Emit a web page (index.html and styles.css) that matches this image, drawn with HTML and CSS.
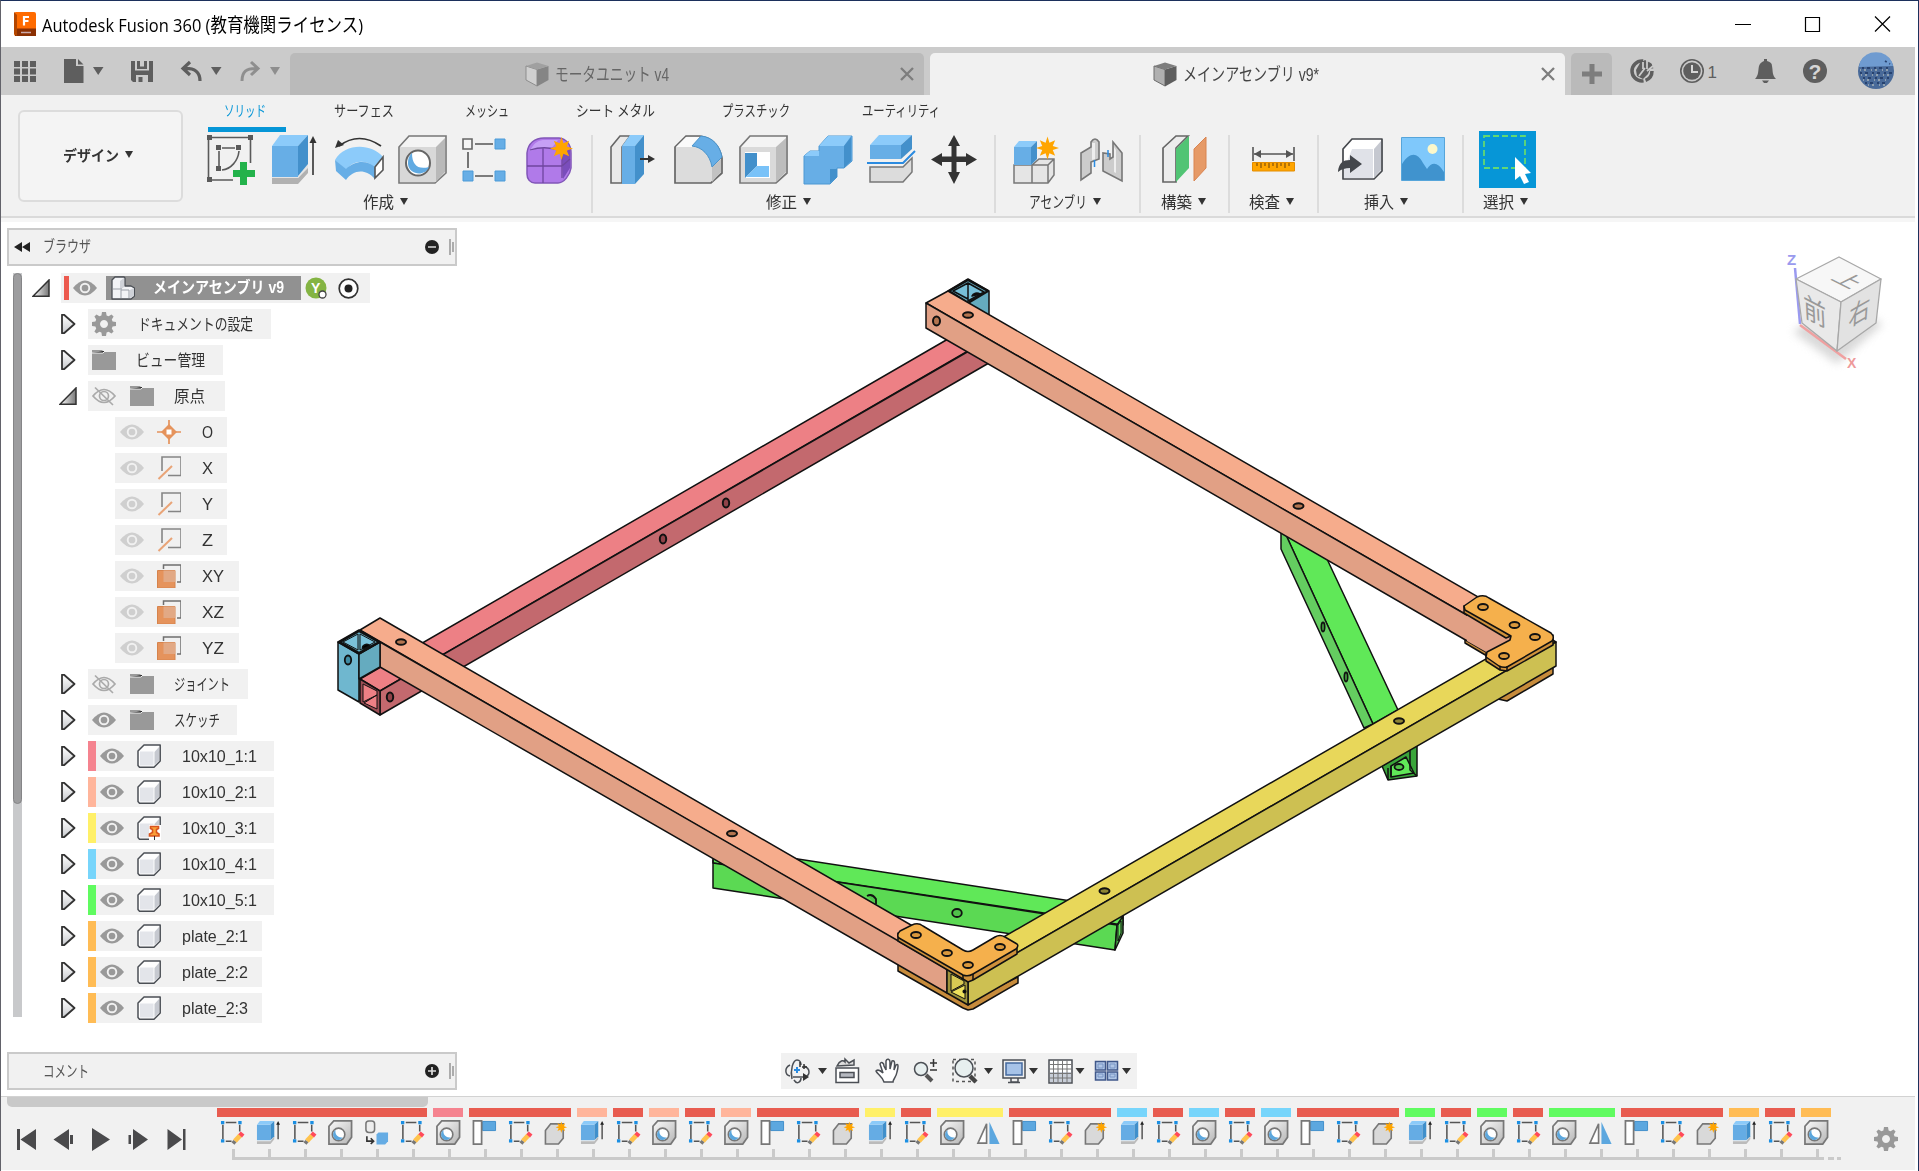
FILE: index.html
```html
<!DOCTYPE html>
<html lang="ja">
<head>
<meta charset="utf-8">
<title>Autodesk Fusion 360</title>
<link rel="stylesheet" href="styles.css">
</head>
<body>
<svg class="defs" width="0" height="0">
  <defs>
    <linearGradient id="gBlue" x1="0" y1="0" x2="0" y2="1"><stop offset="0" stop-color="#7cc0f5"/><stop offset="1" stop-color="#5fabe3"/></linearGradient>
    <linearGradient id="gGray" x1="0" y1="0" x2="1" y2="1"><stop offset="0" stop-color="#fafafa"/><stop offset="1" stop-color="#b5b5b5"/></linearGradient>
    <linearGradient id="gTri" x1="0" y1="0" x2="1" y2="0"><stop offset="0" stop-color="#fff"/><stop offset="1" stop-color="#777"/></linearGradient>
    <linearGradient id="gFace" x1="0" y1="0" x2="0" y2="1"><stop offset="0" stop-color="#fff"/><stop offset="1" stop-color="#c9cbcf"/></linearGradient>
    <symbol id="star" viewBox="-12 -12 24 24"><path fill="#ffa500" d="M0-12 2-5.500 8-8 5.500-2 12 0 5.500 2 8 8 2 5.500 0 12-2 5.500-8 8-5.500 2-12 0-5.500-2-8-8-2-5.500z"/></symbol>
    <symbol id="gear" viewBox="-12 -12 24 24"><path fill="#999" fill-rule="evenodd" d="M-2-12H2L2.600-8.600 4.600-7.800 7.500-9.600 9.600-7.500 7.800-4.600 8.600-2.600 12-2V2L8.600 2.600 7.800 4.600 9.600 7.500 7.500 9.600 4.600 7.800 2.600 8.600 2 12H-2L-2.600 8.600-4.600 7.800-7.500 9.600-9.600 7.500-7.800 4.600-8.600 2.600-12 2V-2L-8.600-2.600-7.800-4.600-9.600-7.500-7.500-9.600-4.600-7.800-2.600-8.600zM0-4a4 4 0 1 0 .01 0z"/></symbol>
    <symbol id="eye" viewBox="0 0 24 24"><path fill="#999" d="M0 12Q12-3 24 12 12 27 0 12z"/><circle cx="12" cy="12" r="4.300" fill="#999" stroke="#f1f1f1" stroke-width="1.900"/></symbol>
    <symbol id="eyeoff" viewBox="0 0 24 24"><g fill="none" stroke="#aaa" stroke-width="1.700"><path d="M1 12Q12-1 23 12 12 25 1 12z"/><circle cx="12" cy="12" r="4.500"/><path d="M3 3.500 21 21"/></g></symbol>
    <symbol id="folder" viewBox="0 0 24 24"><path fill="#999" d="M0 2h10l2 2H24V22H0z"/><path stroke="#f1f1f1" d="M0 5h11l2-2"/></symbol>
    <symbol id="origin" viewBox="0 0 24 24"><path stroke="#e5935c" stroke-width="1.700" d="M12 0V24M0 12H24"/><path fill="#e5935c" d="M12 4 20 12 12 20 4 12z"/><path fill="#fff" d="M9.500 9.500h5v5h-5z"/></symbol>
    <symbol id="axis" viewBox="0 0 24 24"><path fill="none" stroke="#858585" stroke-width="1.600" d="M5 15V1H24V19.500H11"/><path stroke="#e9a477" stroke-width="2" d="M1.500 23 15 10"/></symbol>
    <symbol id="plane" viewBox="0 0 24 24"><path fill="none" stroke="#6f6f6f" stroke-width="1.500" d="M6.500 5V1H24V18H20"/><path fill="#e5935c" stroke="#d6834c" d="M.5 6.500H18V24H.5z"/><path fill="#e2a985" d="M6.500 6.500H18V18H6.500z"/></symbol>
    <symbol id="box" viewBox="0 0 24 24"><path fill="#fdfdfd" stroke="#4b4f55" stroke-width="1.500" stroke-linejoin="round" d="M1 7 7 1H23.200V17L17 23.200H2.500L1 21.500z"/><path fill="#e3e5ea" d="M3 7.500H16.500V21.500H3z"/><path fill="#c6c9d0" d="M17.500 8 22 3V16.500L17.500 21z"/></symbol>
    <symbol id="pinbox" viewBox="0 0 24 24"><use href="#box"/><path fill="#fff" d="M12 9H24V24H12z"/><path fill="#f9a13a" stroke="#d9541e" stroke-width="1.600" d="M13.500 10.500h8v2l-2 1v3l2.500 1.500v2H12.500v-2l3-1.500v-3l-2-1z"/><path stroke="#333" d="M17.500 20V24"/></symbol>
    <symbol id="assy" viewBox="0 0 24 24"><path fill="#f2f3f6" stroke="#4b4f55" stroke-width="1.300" stroke-linejoin="round" d="M1 4 4 1H13L14 2V10H20L23.500 12V20L20 23H1z"/><path fill="#cfd2d8" d="M9 5 13 2V11L9 14zM19 14l4-2v8l-4 2z"/><path fill="none" stroke="#9ba0a8" d="M2 13H9M10 12V22M10 14h8v8"/></symbol>
    <symbol id="tSketch" viewBox="0 0 26 26"><path fill="none" stroke="#555" stroke-width="1.600" d="M3 5V20M6 2.500H17M20.500 5V12M6 22H12"/><path fill="#1a8fe3" d="M1 1h3.500v3.500H1zM19 1h3.500v3.500H19zM1 20h3.500v3.500H1z"/><path stroke="#ffc34d" stroke-width="5" d="M15.500 22 21 16"/><path stroke="#ff4a5a" stroke-width="5" d="M21 16.500 23.500 13.500"/><path stroke="#777" stroke-width="4" d="M13.500 24.500 15.500 22"/></symbol>
    <symbol id="tExtrude" viewBox="0 0 26 26"><path fill="#bbb" d="M1 22H15L19 17V20L15 25H1z"/><path fill="#65ace4" d="M1 5H15V21H1z"/><path fill="#8bcaf9" d="M1 5 4 1H19L15 5z"/><path fill="#3f8fcb" d="M15 5 19 1V17L15 21z"/><path stroke="#444" stroke-width="1.400" d="M23 3V20"/><path fill="#222" d="M23 1 25 5H21z"/></symbol>
    <symbol id="tHole" viewBox="0 0 26 26"><path fill="url(#gGray)" stroke="#777" stroke-width="1.800" d="M1 6.500 6 1H24.500V18L19.500 25H1z"/><circle cx="11" cy="15" r="6.500" fill="#fff" stroke="#777" stroke-width="1.700"/><path fill="#5ca7dd" d="M8 10.500a6 6 0 0 0 7.500 7.500 5.500 5.500 0 1 1-7.500-7.500z"/></symbol>
    <symbol id="tCopy" viewBox="0 0 26 26"><rect x="2" y="1" width="9" height="12" rx="3" fill="#ededed" stroke="#777" stroke-width="1.600"/><path fill="#65ace4" d="M13 15 15 13H25V22L22 25.500H13z"/><path fill="none" stroke="#333" stroke-width="1.700" d="M3 17V22H9M7 19l3 3-3 3"/></symbol>
    <symbol id="tL" viewBox="0 0 26 26"><path fill="#5ca7df" stroke="#3f8fcb" d="M11 1.500H24.500V11H11z"/><path fill="#fff" stroke="#777" stroke-width="1.800" d="M1.500 1H10V25H1.500z"/></symbol>
    <symbol id="tComp" viewBox="0 0 26 26"><path fill="#d9d9d9" stroke="#777" stroke-width="1.700" d="M1.500 11 7 4H20V19L15 25H1.500z"/><use href="#star" x="12" y="1" width="12" height="13"/></symbol>
    <symbol id="tMirror" viewBox="0 0 26 26"><path fill="#fff" stroke="#777" stroke-width="1.700" d="M11 4V24H2z"/><path fill="#5ca7df" d="M14 2 24.500 25H14z"/></symbol>
  </defs>
</svg>

<div class="window">
  <header class="titlebar">
    <svg class="appicon" width="22" height="25" viewBox="0 0 22 25"><rect width="22" height="24" rx="2" fill="#ff6b00"/><path fill="#8b3003" d="M1 16.500H22V24H1z"/><path fill="#b34600" d="M0 0 3 3V24L0 22z"/><path fill="none" stroke="#fff" stroke-width="2.200" d="M10 13.500V5H15M10 9h4.500"/><path stroke="#caa" stroke-width="1.500" d="M7 20.500H17"/></svg>
    <span class="fit title" data-w="321">Autodesk Fusion 360 (教育機関ライセンス)</span>
    <svg class="winbtns" width="160" height="20" viewBox="0 0 160 20"><g fill="none" stroke="#000" stroke-width="1.200"><path d="M0 10.500H16M70.500 3.500H84.500V17.500H70.500zM140 2.500 155 17.500M155 2.500 140 17.500"/></g></svg>
  </header>

  <div class="tabbar">
    <svg class="quick" width="274" height="28" viewBox="0 0 274 28" fill="#5e5e5e">
      <path d="M0 3h6v6H0zM8 3h6v6H8zM16 3h6v6h-6zM0 10.500h6v6H0zM8 10.500h6v6H8zM16 10.500h6v6h-6zM0 18h6v6H0zM8 18h6v6H8zM16 18h6v6h-6z"/>
      <path d="M50 1H62V8H69.500V25H50zM64 1 69.500 6.500H64zM79 9H89.500L84.200 17z"/>
      <path d="M117 3H139V24H119L117 22z"/><path fill="#cbcbcb" d="M121 3H135V12.500H121zM122 17h12v7H122z"/><path d="M123 3H133V11H123zM124.500 19h4v5h-4z"/><path fill="#cbcbcb" d="M126 3H130V8.500H126z"/>
      <path fill="none" stroke="#5e5e5e" stroke-width="3.200" d="M176 4 169 10.500 176 17M170 10.500C181 10 186 14 186 23"/><path d="M197 9H207.500L202.200 17z"/>
      <g opacity=".55"><path fill="none" stroke="#5e5e5e" stroke-width="3" d="M237 4 244 10.500 237 17M243 10.500C232 10 228 14 228 23"/><path d="M256 9H266L261 17z"/></g>
    </svg>
    <div class="tab idle">
      <svg class="cube" width="24" height="25" viewBox="0 0 24 25"><path fill="#d0d0d0" stroke="#8d8d8d" d="M1 4 12 7.500V24L1 18z"/><path fill="#858585" d="M12 7.500 23.500 4V18L12 24.500z"/><path fill="#a0a0a0" d="M1 4 12 .5 23.500 4 12 7.500z"/></svg>
      <span class="fit" data-w="114">モータユニット v4</span>
      <svg class="x" width="14" height="14" viewBox="0 0 14 14"><path stroke="#7d7d7d" stroke-width="2.300" d="M1 1 13 13M13 1 1 13"/></svg>
    </div>
    <div class="tab live">
      <svg class="cube" width="24" height="25" viewBox="0 0 24 25"><path fill="#b0b0b0" stroke="#6c6c6c" d="M1 4 12 7.500V24L1 18z"/><path fill="#5e5e5e" d="M12 7.500 23.500 4V18L12 24.500z"/><path fill="#7d7d7d" d="M1 4 12 .5 23.500 4 12 7.500z"/></svg>
      <span class="fit" data-w="136">メインアセンブリ v9*</span>
      <svg class="x" width="14" height="14" viewBox="0 0 14 14"><path stroke="#7d7d7d" stroke-width="2.300" d="M1 1 13 13M13 1 1 13"/></svg>
    </div>
    <div class="newtab"><svg width="20" height="20" viewBox="0 0 20 20"><path stroke="#7d7d7d" stroke-width="5" d="M10 0V20M0 10H20"/></svg></div>
    <svg class="status" width="270" height="40" viewBox="1628 51 270 40">
      <circle cx="1643" cy="71" r="10" fill="none" stroke="#5e5e5e" stroke-width="3.500" stroke-dasharray="12 2 34 6 6 3"/><path fill="#5e5e5e" d="M1637 70 1641 63 1646 60 1653 64 1649 74 1644 79 1638 76z"/><path stroke="#cbcbcb" stroke-width="1.800" d="M1640 76 1646 68M1644 69V62M1648 69V60M1648 71 1654 66"/>
      <circle cx="1693" cy="71" r="11.200" fill="none" stroke="#5e5e5e" stroke-width="1.600"/><circle cx="1693" cy="71" r="8.800" fill="#5e5e5e"/><path fill="none" stroke="#d6d6d6" stroke-width="2" d="M1693 65V72H1699"/>
      <text x="1708.500" y="77.500" class="jobs">1</text>
      <path fill="#5e5e5e" d="M1756 79C1760 75 1759 70 1760 66 1761 63 1763 62 1765 61V59H1768V61C1771 62 1773 63 1773 66 1774 71 1773 75 1777 79zM1763 80.500h7l-2 2.500h-3z"/>
      <circle cx="1816" cy="71" r="12" fill="#5e5e5e"/><text x="1816" y="79" class="help" text-anchor="middle">?</text>
      <circle cx="1877" cy="71" r="18" fill="#496a99"/><path fill="#6f9bd0" d="M1861 62A18 18 0 0 1 1893 62L1894 66 1860 67z"/><g fill="none" stroke="#a6b2b8" stroke-width="1.300" stroke-dasharray="1 3 2 5"><path d="M1861 70H1894M1862 75H1893M1864 80H1890M1869 85H1886"/></g><g fill="none" stroke="#27426f" stroke-width="1.800" stroke-dasharray="2 3 3 4"><path d="M1863 68H1892M1861 73H1893M1864 78H1891M1866 83H1888M1886 61l5 3"/></g>
    </svg>
  </div>

  <div class="ribbon">
    <div class="workspace"><span class="fit" data-w="56">デザイン</span><i class="caret"></i></div>
    <div class="tools">
      <nav class="modes">
        <span class="mode on"><span class="fit" data-w="42">ソリッド</span></span>
        <span class="mode m2"><span class="fit" data-w="60">サーフェス</span></span>
        <span class="mode m3"><span class="fit" data-w="44">メッシュ</span></span>
        <span class="mode m4"><span class="fit" data-w="79">シート メタル</span></span>
        <span class="mode m5"><span class="fit" data-w="68">プラスチック</span></span>
        <span class="mode m6"><span class="fit" data-w="78">ユーティリティ</span></span>
      </nav>
      <div class="groups">
        <section class="group create">
          <div class="icons">
            <svg viewBox="0 0 50 50"><g fill="none" stroke="#5a5a5a" stroke-width="1.600"><path d="M1.500 5V42M5 2.500H41M43.500 5V28M5 45H26M12 16V32M15 13H28M32 16C31 26 24 34 15 35"/></g><path fill="#5a5a5a" d="M0 0h5v5H0zM41 0h5v5h-5zM0 42h5v5H0zM9 10h5v5H9zM29 10h5v5h-5zM9 31h5v5H9z"/><path fill="#23b24b" d="M33 27h7v8h8v7h-8v8h-7v-8h-7v-7h7z"/></svg>
            <svg viewBox="0 0 50 50"><path fill="#b1b1b1" d="M1 43H27L37 31V38L27 49H1z"/><path fill="#e4e4e4" d="M1 41H27L37 29V33L27 43H1z"/><path fill="#67aee6" d="M1 11H27V42H1z"/><path fill="#8ccbfa" d="M1 11 9 0H37L27 11z"/><path fill="#4390cb" d="M27 11 37 0V29L27 41z"/><path stroke="#333" stroke-width="1.600" d="M42 5V40"/><path fill="#333" d="M42 1 45.500 8H38.500z"/></svg>
            <svg viewBox="0 0 50 50"><path fill="none" stroke="#333" stroke-width="1.700" d="M4 11Q24-4 46 11"/><path fill="#333" d="M0 13 3 5 9 10z"/><path fill="#8ccbfa" d="M0 25C10 8 36 8 48 22L40 32C30 24 18 25 11 35z"/><path fill="#67aee6" d="M0 25 11 34V45L1 36zM11 34C20 25 32 25 40 32V44C30 33 18 35 11 45z"/><path fill="#fff" stroke="#555" stroke-width="1.600" d="M40 32 48 22V35L40 43z"/></svg>
            <svg viewBox="0 0 50 50"><path fill="#f4f4f4" stroke="#777" stroke-width="1.600" d="M1 12 11 1H48V38L37 48H1z"/><path fill="#d8d8d8" d="M2 12H38V47H2z"/><path fill="#b9b9b9" d="M38 12 47 3V37L38 47z"/><ellipse cx="20" cy="28" rx="12" ry="12.500" fill="#fff" stroke="#666" stroke-width="2"/><path fill="#60aae2" d="M14 18C14 30 20 35 31 32 27 42 11 40 10 29 10 23 11 21 14 18z"/></svg>
            <svg viewBox="0 0 50 50"><path fill="#f5f5f5" stroke="#666" stroke-width="1.600" d="M1 4H10V14H1z"/><path fill="#67aee6" stroke="#4d9bd8" d="M33 4H43V14H33zM1 36H11V46H1zM33 36H43V46H33z"/><path stroke="#555" stroke-width="1.600" d="M13 9H31M6 17V33M13 41H31"/></svg>
            <svg viewBox="0 0 50 50"><path fill="#b07ae9" stroke="#8156b8" stroke-width="1.500" d="M1 18C2 8 9 3 18 3H33C40 4 45 9 45 18V33C44 40 38 48 32 48H9C4 48 1 44 1 39z"/><path fill="#c6a0f5" d="M4 16C8 7 13 5 19 5H32L25 14C17 12 10 13 4 16z"/><path fill="#7a4dbb" d="M36 18 44 14V33L37 44z"/><path fill="none" stroke="#6f469f" stroke-width="1.300" d="M1 31H36L44 24M17 13V48M4 15Q20 10 35 16M36 16V43"/><use href="#star" x="24" y="1" width="23" height="25"/></svg>
          </div>
          <div class="glabel"><span class="fit" data-w="31">作成</span><i class="caret"></i></div>
        </section>
        <section class="group modify">
          <div class="icons">
            <svg viewBox="0 0 50 50"><path fill="#e9e9e9" stroke="#666" stroke-width="1.600" d="M1 12 10 1H20L12 12V48H1z"/><path fill="#67aee6" d="M12 11H25V49H12z"/><path fill="#8ccbfa" d="M12 11 20 0H34L25 11z"/><path fill="#4390cb" d="M25 11 34 0V39L25 49z"/><path stroke="#333" stroke-width="2" d="M30 24H39"/><path fill="#333" d="M38 20 45 24 38 28z"/></svg>
            <svg viewBox="0 0 50 50"><path fill="#dcdcdc" stroke="#666" stroke-width="1.700" d="M1 12 12 1H26Q44 4 48 23V38L37 48H1z"/><path fill="#fafafa" d="M2 12 12 2H26L18 12z"/><path fill="#c2c2c2" d="M38 32 47 24V37L38 47z"/><path fill="#67aee6" stroke="#4b94cb" d="M18 11 27 1C39 2 46 11 48 22L38 32C36 20 28 12 18 11z"/></svg>
            <svg viewBox="0 0 50 50"><path fill="#f4f4f4" stroke="#777" stroke-width="1.700" d="M1 12 11 1H48V38L37 48H1z"/><path fill="#dadada" d="M2 12H37V47H2z"/><path fill="#bdbdbd" d="M37 12 47 3V37L37 47z"/><path fill="#fff" d="M6 17H31V43H6z"/><path fill="#4390cb" d="M6 18H18V31L6 43z"/><path fill="#79c2f8" d="M18 31H30V42H7z"/></svg>
            <svg viewBox="0 0 50 50"><path fill="#67aee6" stroke="#4c98d3" d="M1 21 7 16H16V11L25 1H49V26L41 33H34V42L27 49H1z"/><path fill="#8ccbfa" d="M16 11 25 1H48L41 11zM1 21 7 16H16V21z"/><path fill="#4390cb" d="M41 11 48 2V26L41 33zM27 34H34V42L27 48z"/></svg>
            <svg viewBox="0 0 50 50"><path fill="#67aee6" d="M3 10H34V24H3z"/><path fill="#8ccbfa" d="M3 10 12 0H45L34 10z"/><path fill="#4390cb" d="M34 10 45 0V14L34 24z"/><path fill="none" stroke="#2b8be0" stroke-width="2" d="M0 28H36L48 16"/><path fill="#dcdcdc" stroke="#777" stroke-width="1.500" d="M3 32H36L45 23V37L36 47H3z"/></svg>
            <svg viewBox="0 0 50 50"><path fill="#333" d="M23 0 29 11H25.500V21.500H35V18L46 24.500 35 31V27H25.500V37H29L23 49 17 37H20.500V27H11V31L0 24.500 11 18V21.500H20.500V11H17z"/></svg>
          </div>
          <div class="glabel"><span class="fit" data-w="31">修正</span><i class="caret"></i></div>
        </section>
        <section class="group assemble">
          <div class="icons">
            <svg viewBox="0 0 50 50"><path fill="#e5e5e5" stroke="#777" stroke-width="1.500" d="M1 30H19L26 24H41V40L35 48H1zM19 30V48M19 30H35V48M35 30 41 24"/><path fill="#67aee6" d="M1 12H18V30H1z"/><path fill="#8ccbfa" d="M1 12 6 6H24L18 12z"/><path fill="#4390cb" d="M18 12 24 6V24L18 30z"/><use href="#star" x="23" y="1" width="23" height="24"/></svg>
            <svg viewBox="0 0 50 50"><path fill="#ccc" stroke="#777" stroke-width="1.600" d="M1 18 11 12V7Q15 1 19 7V24L11 27V38L1 45zM42 18 33 7V22L30 24V19L23 18V36L42 46z"/><path fill="#eee" d="M12 8H15V24L12 25zM34 12 36 15V38L34 37z"/><path stroke="#2b8be0" stroke-width="1.500" d="M14.500 25V32M28 15V22"/></svg>
          </div>
          <div class="glabel"><span class="fit" data-w="58">アセンブリ</span><i class="caret"></i></div>
        </section>
        <section class="group construct">
          <div class="icons"><svg viewBox="0 0 50 50"><path fill="#ececec" stroke="#666" stroke-width="1.700" d="M1 13 14 1H26L14 13V47H1z"/><path fill="#51c474" d="M14 14 27 1V33L14 47z"/><path fill="#e69a67" stroke="#d98451" d="M32 14 44 2V33L32 46z"/></svg></div>
          <div class="glabel"><span class="fit" data-w="31">構築</span><i class="caret"></i></div>
        </section>
        <section class="group inspect">
          <div class="icons"><svg viewBox="0 0 50 50"><path fill="none" stroke="#555" stroke-width="1.600" d="M1 12V26M42 12V26M2 19H41"/><path fill="#555" d="M2 19 9 15V23zM41 19 34 15V23z"/><path fill="#ffa500" stroke="#e48d00" d="M.5 27.500H42.500V36H.5z"/><path stroke="#84520a" stroke-width="1.200" d="M5 28v3M9 28v5M13 28v3M17 28v5M21 28v3M25 28v5M29 28v3M33 28v5M37 28v3"/></svg></div>
          <div class="glabel"><span class="fit" data-w="31">検査</span><i class="caret"></i></div>
        </section>
        <section class="group insert">
          <div class="icons">
            <svg viewBox="0 0 50 50"><path fill="#fff" stroke="#44474c" stroke-width="1.700" stroke-linejoin="round" d="M5 14 14 4H44V36L36 44H5z"/><path fill="#e0e2e8" d="M14 14H35V43H6V35z"/><path fill="#c5c8d0" d="M36 14 43 6V35L36 43z"/><path fill="#44474c" d="M0 36C1 28 5 25 12 25V20L24 29 12 38V33C7 33 4 34 0 37z"/></svg>
            <svg viewBox="0 0 50 50"><path fill="#7fc8fb" stroke="#56a5da" d="M.5 2.500H43.500V45.500H.5z"/><path fill="#4093ce" d="M1 29C9 17 16 17 22 28L26 34C31 26 37 27 43 37V45H1z"/><circle cx="31.500" cy="14" r="5" fill="#fcf8cb"/></svg>
          </div>
          <div class="glabel"><span class="fit" data-w="30">挿入</span><i class="caret"></i></div>
        </section>
        <section class="group select">
          <svg class="big" width="57" height="57" viewBox="0 0 57 57"><path fill="#0696d7" d="M0 0H57V57H0z"/><path fill="none" stroke="#62d873" stroke-width="1.800" stroke-dasharray="6 3" d="M5 5H46V37H5z"/><path fill="#fff" d="M36 26V49L41 45 45 53 50 51 46 43 52 42z"/></svg>
          <div class="glabel"><span class="fit" data-w="31">選択</span><i class="caret"></i></div>
        </section>
      </div>
    </div>
  </div>

  <main class="viewport">
    <svg class="model" width="1914" height="874" viewBox="1 222 1914 874" stroke="#111" stroke-width="1.500" stroke-linejoin="round">
      <!-- red beam -->
      <path fill="#ed8085" d="M360 679 948 339 988 340 968 351 380 691z"/>
      <path fill="#c3696e" d="M380 691 988 340V363.500L380 715z"/>
      <path fill="#9c4e55" d="M360 679 380 691V715L360 703z"/><path fill="#ed8085" d="M363 684 377 691V695L363 702zM364 703 377 695V709z" stroke-width="1"/>
      <!-- green braces -->
      <path fill="#60e858" d="M1286 535 1327 559 1398 710 1373 724z"/><path fill="#64cd60" d="M1281 525 1286 535 1373 724 1364 728 1281 549z"/>
      <path fill="#3aa53a" d="M1382 766 1417 745V776L1388 780z"/><path fill="#60e858" d="M1391 766 1406 757 1414 773 1391 777z"/><path fill="none" d="M1388 768V780M1410 750V770L1417 776M1391 766V777"/>
      <path fill="#60e858" d="M713 846 1123 909V925L713 863z"/><path fill="#5bd953" d="M713 860V888L1115 950 1117 925 713 863z"/><path fill="#4cae49" d="M1115 950 1117 925 1123 916V933z"/><path fill="#62e35b" d="M1118 941V925L1121 921V933z" stroke-width="1"/>
      <!-- rear blue post, lower rear plate and upper orange beam -->
      <path fill="#65abbf" d="M948 291 968 279 989 291V316L968 306z"/><path fill="#78bfd7" d="M953 291 968 283V299zM968 283 984 292 968 301z"/><path fill="none" stroke-width="2.200" d="M949 291 968 280 988 291 968 303z"/><path d="M972 296a5 4 0 0 1 8-2z"/>
      <path fill="#c78b3b" d="M1465 637V643L1487 656V650zM1498 699 1507 701 1553 674V664L1500 690z"/>
      <path fill="#f6ac8c" d="M926 303 948 291 1530 627 1510 640z"/><path fill="#e1a085" d="M926 303 1510 640 1488 653 926 328z"/>
      <!-- left blue post and lower orange beam -->
      <path fill="#f6ac8c" d="M360 630 380 618 968 958 947 970z"/><path fill="#c78b3b" d="M898 964V971L963 1008 968 1010 973 1009 1018 983V977L968 1002z"/><path fill="#e1a085" d="M380 642 947 969V993L380 667z"/>
      <path fill="#6fb7cf" d="M338 642 359 654V702L338 690z"/><path fill="#65abbf" d="M359 654 380 642V667L359 679z"/><path fill="#69b3c9" d="M338 642 359 630 380 642 359 654z"/><path fill="#7bc2da" stroke-width="1" d="M343 642 358 634V650zM360 634 375 642 360 650z"/><path fill="none" stroke-width="2.200" d="M340 642 359 631 379 642 359 653z"/><path d="M363 649a4 3 0 0 1 7-3z"/>
      <!-- yellow beam -->
      <path fill="#e8d75a" d="M948 969 1536 630 1556 642 968 981z"/><path fill="#cdc052" d="M968 981 1556 642V666L968 1005z"/>
      <path fill="#9e933b" d="M947 968 968 981V1005L947 993z"/><path fill="#d8c953" stroke-width="1" d="M951 974 964 981V984L951 991z"/><path fill="#eee15c" stroke-width="1" d="M951 992 965 985V999z"/><circle cx="964.500" cy="991.500" r="1.300"/>
      <!-- corner plates -->
      <path fill="#e1a085" stroke="none" d="M1467 613 1509 637 1510 641 1488 653 1467 641z"/>
      <path fill="#cf913b" d="M1464 606V613L1506 638 1511 636zM1486 653V661L1500 670 1507 671 1553 645V635L1507 660z"/><path fill="#f5b04c" d="M1464 606 1477 597Q1484 594 1489 598L1551 633Q1555 637 1552 641L1507 667Q1503 668 1499 666L1486 657 1487 652 1510 640 1511 636 1465 610z"/><path fill="none" d="M1500 666V670M1507 666V671"/>
      <path fill="#cf913b" d="M898 933V941L963 979 968 982 973 980 1017 954V945L970 972z"/><path fill="#f5b04c" d="M900 931 912 925Q918 922 923 926L963 950Q968 953 973 950L995 937Q1000 934 1005 937L1017 944Q1019 946 1016 949L973 974Q968 977 963 975L899 938Q896 935 900 931z"/><path fill="none" d="M963 975V980M973 974V980"/>
      <g fill="#b3744f" stroke-width="2"><ellipse cx="401" cy="642" rx="5" ry="2.800"/><ellipse cx="732" cy="833.500" rx="5" ry="2.800"/><ellipse cx="968" cy="315" rx="5" ry="2.800"/><ellipse cx="1298.500" cy="506" rx="5" ry="2.800"/><ellipse cx="936.500" cy="321" rx="3.500" ry="4.500"/></g>
      <g fill="#8d8434" stroke-width="2"><ellipse cx="1399" cy="721" rx="5" ry="2.800"/><ellipse cx="1104.500" cy="891" rx="5" ry="2.800"/></g>
      <g fill="#8f4248" stroke-width="2"><ellipse cx="726" cy="503" rx="3.200" ry="4.500"/><ellipse cx="663" cy="539" rx="3.200" ry="4.500"/><ellipse cx="390" cy="697" rx="3.200" ry="4.500"/></g>
      <g fill="#50c24a" stroke-width="1.800"><ellipse cx="348" cy="660" rx="3.200" ry="4.500" fill="#3f8ba3"/><ellipse cx="957" cy="913" rx="4.800" ry="4"/><path d="M867 896Q872 893 876 899L876 904"/><ellipse cx="1323" cy="627" rx="1.600" ry="4.500"/><ellipse cx="1346" cy="677" rx="1.600" ry="4.500"/><ellipse cx="1399" cy="767" rx="4.500" ry="3"/></g>
      <g fill="#d9983d" stroke-width="1.800"><ellipse cx="1483" cy="607" rx="5" ry="3"/><ellipse cx="1514.500" cy="625" rx="5" ry="3"/><ellipse cx="1535" cy="637" rx="5" ry="3"/><ellipse cx="1504" cy="656" rx="5" ry="3"/><ellipse cx="916" cy="935" rx="5" ry="3"/><ellipse cx="947" cy="953" rx="5" ry="3"/><ellipse cx="968" cy="965" rx="5" ry="3"/><ellipse cx="1000" cy="947" rx="5" ry="3"/></g>
    </svg>

    <svg class="viewcube" width="110" height="130" viewBox="1785 245 110 130">
      <path fill="#c9c9c9" opacity=".7" d="M1794 332 1838 364 1884 324 1840 300z" class="soft"/>
      <path stroke="#9a9af0" stroke-width="2.500" d="M1796 268 1801 324"/><path stroke="#f0a0a0" stroke-width="2.500" d="M1801 325 1847 359"/>
      <g stroke="#a8a8a8" stroke-width="1.300" stroke-linejoin="round"><path fill="#f7f7f7" d="M1797 279 1840 257 1882 279 1842 302z"/><path fill="#e9e9e9" d="M1797 279 1842 302 1838 351 1803 323z"/><path fill="#e2e2e2" d="M1842 302 1882 279 1877 323 1838 351z"/></g>
      <text class="axz" x="1788" y="265">Z</text><text class="axx" x="1848" y="368">X</text>
      <text class="face" transform="matrix(.84 .42 -.84 .42 1831 279)">上</text>
      <text class="face" transform="matrix(.92 .48 .06 1.150 1805 316)">前</text>
      <text class="face" transform="matrix(.86 -.5 -.08 1.050 1849 328)">右</text>
    </svg>

    <aside class="side">
      <div class="panelbar"><svg width="16" height="10" viewBox="0 0 16 10"><path fill="#222" d="M8 0V10L0 5zM16 0V10L8 5z"/></svg><span class="fit ptext" data-w="48">ブラウザ</span><svg class="pend" width="30" height="16" viewBox="0 0 30 16"><circle cx="7" cy="8" r="7" fill="#222"/><path stroke="#ddd" stroke-width="1.500" d="M3 8H11"/><path stroke="#888" stroke-width="1.300" d="M25 0V16M28 3V13"/></svg></div>
      <div class="treewrap"><div class="scroll"><div class="thumb"></div></div><div class="tree" id="tree"></div></div>
      <div class="panelbar comment"><svg width="16" height="10"></svg><span class="fit ptext" data-w="46">コメント</span><svg class="pend" width="30" height="16" viewBox="0 0 30 16"><circle cx="7" cy="8" r="7" fill="#222"/><path stroke="#ddd" stroke-width="1.700" d="M3 8H11M7 4V12"/><path stroke="#888" stroke-width="1.300" d="M25 0V16M28 3V13"/></svg></div>
    </aside>

    <div class="navbar">
      <svg width="356" height="36" viewBox="781 1053 356 36" fill="none" stroke="#4b4f55" stroke-width="1.500">
        <path d="M790 1065C784 1068 785 1075 790 1076M793 1077H806M804 1066C811 1069 810 1075 805 1077M792 1079C790 1070 793 1060 797 1060 800 1060 801 1063 801 1065M801 1078C801 1082 797 1085 794 1080"/><path fill="#333" stroke="none" d="M803 1073 809 1077 803 1081z"/><path stroke="#2b8be0" stroke-width="2" d="M797 1067v6M794 1070h6"/><path stroke="#333" d="M800 1062v5M804 1064v5M802 1067h5"/>
        <path fill="#fff" d="M836 1068H858.500V1082.500H836z"/><path fill="#b6b9c0" d="M840 1072.500H854V1077.500H840z"/><path fill="#ddd" d="M837 1066C840 1060 843 1060 845 1062V1059L849 1063 854 1060V1065z"/>
        <path fill="#fff" d="M884 1082C882 1076 877 1074 876 1071 878 1069 881 1071 883 1073L880 1064C881 1061 884 1063 884 1066L886 1070V1061C887 1058 890 1059 890 1062V1069L892 1061C895 1060 895 1063 894 1070L896 1065C899 1063 898 1068 897 1072 896 1078 893 1079 893 1082z"/>
        <path stroke="#555" stroke-width="4" d="M926 1075 932 1081"/><circle cx="921" cy="1069" r="6.500" fill="#e7efef"/><path stroke="#333" d="M933.500 1059v8M930 1063h7M930 1070h7"/>
        <path stroke-dasharray="3 3" stroke="#555" d="M953 1059.500H975V1081.500H953z"/><path stroke="#444" stroke-width="4.500" d="M970 1076 976 1082"/><circle cx="964" cy="1068" r="9" fill="#e7efef"/>
        <path fill="#eee" d="M1003 1060H1025V1078H1003zM1011 1078h7v4h-7zM1008 1082.500h12"/><path fill="#a7c3e8" stroke="#44699e" d="M1006 1063H1022V1075H1006z"/>
        <path fill="#fff" d="M1049 1060H1072V1083H1049z"/><path fill="#c8ced8" stroke="none" d="M1050 1072H1071V1082H1050z"/><path stroke-width="1" stroke="#777" d="M1053.500 1060V1083M1058 1060V1083M1062.500 1060V1083M1067 1060V1083M1049 1064.500H1072M1049 1069H1072M1049 1073.500H1072M1049 1078H1072"/>
        <path fill="#b0c6e6" stroke="#40588a" d="M1095.500 1061.500H1105.500V1070H1095.500zM1107.500 1061.500H1117.500V1070H1107.500zM1095.500 1072H1105.500V1080H1095.500zM1107.500 1072H1117.500V1080H1107.500z"/><path stroke="#7995c5" stroke-width="1" d="M1098 1064h5v4h-5zM1110 1064h5v4h-5zM1098 1074h5v3h-5zM1110 1074h5v3h-5z"/>
        <path fill="#333" stroke="none" d="M818 1068h9l-4.500 6zM984 1068h9l-4.500 6zM1029 1068h9l-4.500 6zM1075.500 1068h9l-4.500 6zM1122 1068h9l-4.500 6z"/>
      </svg>
    </div>
  </main>

  <footer class="timeline">
    <div class="hthumb"></div>
    <svg class="play" width="172" height="24" viewBox="16 1128 172 24" fill="#4a4a4c"><path d="M17 1129h3v21h-3zM36 1129V1150L20.500 1139.500zM69 1129V1150L53.500 1139.500zM70 1135h3v9h-3zM92 1128V1151L110 1139.500zM128.500 1135h2.500v9h-2.500zM133 1129V1150L148 1139.500zM167.500 1129V1150L182 1139.500zM183 1129h2.500v21H183z"/></svg>
    <div class="track"><div class="bars" id="bars"></div><div class="feats" id="feats"></div><div class="rail"><div class="line"></div><i class="d1"></i><i class="d2"></i></div></div>
    <svg class="prefs" width="24" height="24"><use href="#gear"/></svg>
  </footer>
</div>
<script src="app.js"></script>
</body>
</html>
```
FILE: styles.css
```css
* { box-sizing: border-box; }
body { margin: 0; background: #fff; font-family: "Noto Sans CJK JP", sans-serif; color: #333; overflow: hidden; }
svg { display: block; flex: none; }
.defs { position: absolute; }
.fit { display: block; white-space: nowrap; flex: none; transform-origin: 0 50%; }
.window { width: 1919px; height: 1171px; border: 1px solid #1c305c; border-left-color: #62626a; border-bottom: 0; display: flex; flex-direction: column; background: #fff; }

.titlebar { height: 46px; flex: none; display: flex; align-items: center; padding-left: 13px; }
.appicon { margin-right: 6px; }
.title { font: 19px/30px "Open Sans", "Noto Sans CJK JP", sans-serif; color: #000; margin-top: 1px; }
.winbtns { margin-left: auto; margin-right: 23px; }

.tabbar { height: 48px; flex: none; width: 1914px; background: #cbcbcb; display: flex; align-items: flex-end; }
.quick { margin: 0 2px 9px 13px; }
.tab { height: 42px; display: flex; align-items: center; border-radius: 5px 5px 0 0; font-size: 18px; line-height: 26px; font-family: "Liberation Sans", "Noto Sans CJK JP", sans-serif; }
.tab .cube { margin-right: 6px; }
.tab .fit { margin-top: 2px; }
.tab .x { margin-left: auto; margin-right: 10px; }
.idle { width: 634px; padding-left: 235px; background: #bababa; color: #666; }
.live { width: 635px; margin-left: 6px; padding-left: 223px; background: #f1f1f1; color: #444; }
.newtab { width: 41px; height: 42px; margin-left: 6px; background: #bababa; border-radius: 5px 5px 0 0; display: flex; align-items: center; justify-content: center; }
.status { margin-left: 15px; margin-bottom: 4px; }
.jobs { font: 17px "Liberation Sans", sans-serif; fill: #5e5e5e; }
.help { font: bold 21px "Liberation Sans", sans-serif; fill: #d6d6d6; }

.ribbon { height: 127px; flex: none; width: 1914px; background: #f1f1f1; display: flex; box-shadow: inset 0 -4px 0 #f6f6f6, inset 0 -6px 0 #dadada; }
.workspace { width: 165px; height: 92px; margin: 15px 0 0 17px; border: 2px solid #dcdcdc; border-radius: 6px; background: #f4f4f4; display: flex; align-items: center; padding: 0 0 3px 43px; font-size: 15px; font-weight: 700; line-height: 22px; }
.caret { display: block; flex: none; border: 4.500px solid transparent; border-top: 7px solid #333; border-bottom: 0; margin-left: 6px; }
.tools { margin-left: 12px; }
.modes { display: flex; height: 38px; margin-left: 13px; font-size: 15px; line-height: 22px; padding-top: 4px; }
.mode { height: 33px; flex: none; }
.on { width: 78px; padding-left: 16px; color: #0696d7; border-bottom: 5px solid #0696d7; }
.m2 { margin-left: 48px; }
.m3 { margin-left: 71px; }
.m4 { margin-left: 67px; }
.m5 { margin-left: 67px; }
.m6 { margin-left: 72px; }
.groups { display: flex; margin-top: 2px; }
.group { height: 78px; border-right: 2px solid #dcdcdc; flex: none; }
.icons { display: flex; height: 50px; }
.icons svg { width: 50px; height: 50px; }
.glabel { display: flex; align-items: center; font-size: 16px; line-height: 22px; height: 22px; margin-top: 5px; }
.create { width: 398px; padding-left: 12px; }
.create .icons { gap: 13.800px; }
.create .glabel { margin-left: 156px; }
.modify { width: 403px; padding-left: 17px; }
.modify .icons { gap: 14.300px; }
.modify .glabel { margin-left: 156px; }
.assemble { width: 145px; padding-left: 17px; }
.assemble .icons { gap: 17px; }
.assemble .glabel { margin-left: 16px; }
.construct { width: 89px; padding-left: 21px; }
.construct .glabel { margin-left: -1px; }
.inspect { width: 89px; padding-left: 22px; }
.inspect .glabel { margin-left: -3px; }
.insert { width: 145px; padding-left: 19px; }
.insert .icons { gap: 13px; }
.insert .glabel { margin-left: 26px; }
.select { border: 0; padding-left: 15px; }
.big { margin-top: -4px; }
.select .glabel { margin: 2px 0 0 4px; }

.viewport { position: relative; height: 874px; flex: none; width: 1914px; background: #fff; display: flex; }
.model { position: absolute; left: 0; top: 0; }
.viewcube { position: absolute; left: 1783px; top: 23px; }
.soft { filter: blur(4px); }
.axz { font: bold 15px "Liberation Sans", sans-serif; fill: #9a9aee; }
.axx { font: bold 14px "Liberation Sans", sans-serif; fill: #ee9a9a; }
.face { font: 25px "Noto Sans CJK JP", sans-serif; fill: #999; }
.side { position: relative; width: 480px; padding: 6px 0 0 6px; }
.panelbar { width: 450px; height: 38px; border: 2px solid #cacaca; background: #f1f1f1; display: flex; align-items: center; padding-left: 5px; }
.ptext { margin: -4px 0 0 13px; font-size: 16px; line-height: 22px; color: #555; }
.comment .ptext { margin-top: -2px; }
.pend { margin-left: auto; }
.treewrap { display: flex; height: 786px; padding: 7px 0 0 6px; }
.scroll { width: 9px; height: 744px; background: #c8c9cb; }
.thumb { height: 531px; background: #9d9d9f; border: 1px solid #858587; border-radius: 5px; }
.tree { padding-left: 10px; }
.row { display: flex; height: 30px; margin-bottom: 6px; align-items: center; }
.chip { height: 30px; background: #f1f1f1; display: flex; align-items: center; flex: none; font: 16px/24px "Liberation Sans", "Noto Sans CJK JP", sans-serif; }
.chip > svg { width: 24px; height: 24px; }
.chip > .fit { margin-top: 1px; }
.swatch { width: 8px; height: 30px; flex: none; }
.faint { opacity: .38; }
.tri { flex: none; width: 27px; }
.tri.open { width: 29px; }
.rootbar { width: 5px; height: 24px; background: #ec5a4f; margin: 0 4px 0 3px; }
.rootname { width: 195px; height: 24px; background: #919191; color: #fff; margin-left: 9px; padding-left: 4px; display: flex; align-items: center; font-weight: 700; }
.rootname .fit { margin-left: 17px; }
.rootname svg { width: 26px; height: 24px; }
.chip .rootend { width: 56px; margin-left: 4px; }
.ylabel { font: bold 14px "Liberation Sans", sans-serif; fill: #fff; }
.navbar { position: relative; align-self: flex-end; margin: 0 0 7px 300px; background: #f1f1f1; }

.timeline { height: 74px; flex: none; width: 1914px; background: #f1f1f1; border-top: 1px solid #d2d2d2; display: grid; grid-template-columns: 216px 1630px 1fr; grid-template-rows: 10px 1fr; }
.hthumb { grid-column: 1 / 4; width: 421px; height: 10px; margin-left: 6px; background: #c9c9c9; border-radius: 0 0 5px 5px; }
.play { margin: 21px 0 0 15px; }
.prefs { margin: 20px 0 0 27px; }
.bars { display: flex; gap: 6px; padding-top: 1px; }
.bars i { display: block; height: 9px; flex: none; }
.feats { display: flex; padding-top: 3px; }
.feat { width: 36px; padding-left: 3px; flex: none; }
.feat svg { width: 25px; height: 25px; }
.feat i { display: block; width: 3px; height: 8px; background: #cacaca; margin: 4px 0 0 12px; }
.rail { display: flex; margin-left: 15px; }
.line { width: 1592px; height: 3px; background: #cacaca; }
.d1 { width: 6px; height: 3px; background: #cacaca; margin-left: 4px; }
.d2 { width: 4px; height: 3px; background: #cacaca; margin-left: 3px; }
```
FILE: app.js
```js
const icon = (id, cls = '') => `<svg class="${cls}" viewBox="0 0 24 24"><use href="#${id}"/></svg>`;
const closed = '<svg class="tri" width="27" height="20" viewBox="0 0 27 20"><path fill="url(#gFace)" stroke="#333" stroke-width="1.8" stroke-linejoin="round" d="M1 .8H3L13.500 10 3 19.200H1z"/></svg>';
const open = '<svg class="tri open" width="29" height="18" viewBox="0 0 29 18"><path fill="url(#gTri)" stroke="#333" stroke-width="1.500" d="M1 17.200 17 1V17.200z"/></svg>';

// chip start, chip width, arrow, icons, icon gap, text gap, text, text width, left pad, swatch
const rows = [
  [88, 183, closed, ['gear'], 0, 22, 'ドキュメントの設定', 115],
  [88, 135, closed, ['folder'], 0, 20, 'ビュー管理', 69],
  [88, 137, open, ['eyeoff', 'folder'], 14, 20, '原点', 31],
  ...['O', 'X', 'Y', 'Z'].map((t, i) => [115, 112, '', ['eye', i ? 'axis' : 'origin'], 13, 21, t, 11, 5]),
  ...['XY', 'XZ', 'YZ'].map(t => [115, 124, '', ['eye', 'plane'], 13, 21, t, 22, 5]),
  [88, 160, closed, ['eyeoff', 'folder'], 14, 20, 'ジョイント', 56],
  [88, 149, closed, ['eye', 'folder'], 14, 20, 'スケッチ', 46],
  ...['#f5838f', '#ffb59b', '#fff068', '#77d5fb', '#60fb60'].map((c, i) =>
    [88, 186, closed, ['eye', i === 2 ? 'pinbox' : 'box'], 13, 21, `10x10_${i + 1}:1`, 75, 4, c]),
  ...[1, 2, 3].map(n => [88, 174, closed, ['eye', 'box'], 13, 21, `plate_2:${n}`, 66, 4, '#ffbc55'])
];

const root = `<div class="row">${open}<div class="chip" style="width:309px"><i class="rootbar"></i>${icon('eye')}
<div class="rootname">${icon('assy')}<span class="fit" data-w="131">メインアセンブリ v9</span></div>
<svg class="rootend" viewBox="305 276 56 24"><circle cx="316" cy="288" r="10.500" fill="#84b443"/><text class="ylabel" x="311" y="293">Y</text><circle cx="322.500" cy="294.500" r="3.500" fill="#fff" stroke="#444" stroke-width="1.300"/><circle cx="348.500" cy="288.500" r="9.300" fill="#fff" stroke="#333" stroke-width="1.700"/><circle cx="348.500" cy="288.500" r="4" fill="#222"/></svg></div></div>`;

document.getElementById('tree').innerHTML = root + rows.map(([x, w, tri, ids, gap, tgap, text, tw, pad = 4, color]) => {
  const faint = x === 115;
  const lead = x - 32 - (tri === open ? 29 : tri ? 27 : 0);
  const pics = ids.map((id, i) => (i ? `<b style="width:${gap}px"></b>` : '') + icon(id, faint && !i ? 'faint' : '')).join('');
  return `<div class="row" style="padding-left:${lead}px">${tri}<div class="chip" style="width:${w}px">` +
    (color ? `<i class="swatch" style="background:${color}"></i>` : '') +
    `<b style="width:${pad}px"></b>${pics}<b style="width:${tgap}px"></b><span class="fit" data-w="${tw}">${text}</span></div></div>`;
}).join('');

const R = '#e85c50', P = '#f5838f', S = '#ffb59b', Y = '#fff068', C = '#77d5fb', G = '#60fb60', O = '#ffbc55';
const bars = [[6, R], [1, P], [3, R], [1, S], [1, R], [1, S], [1, R], [1, S], [3, R], [1, Y], [1, R], [2, Y], [3, R], [1, C], [1, R], [1, C], [1, R], [1, C], [3, R], [1, G], [1, R], [1, G], [1, R], [2, G], [3, R], [1, O], [1, R], [1, O]];
document.getElementById('bars').innerHTML = bars.map(([n, c]) => `<i style="width:${n * 36 - 6}px;background:${c}"></i>`).join('');

const names = { s: 'Sketch', e: 'Extrude', h: 'Hole', c: 'Copy', l: 'L', n: 'Comp', m: 'Mirror' };
document.getElementById('feats').innerHTML = [...'seshcshlsneshshlsneshmlsneshshlsneshshmlsnesh'].map(k =>
  `<div class="feat"><svg viewBox="0 0 26 26"><use href="#t${names[k]}"/></svg><i></i></div>`).join('');

// Squeeze each label to the width of its slot.
document.querySelectorAll('.fit').forEach(el => {
  const want = +el.dataset.w;
  const range = document.createRange();
  range.selectNodeContents(el);
  const have = range.getBoundingClientRect().width;
  el.style.width = want + 'px';
  el.style.transform = `scaleX(${want / have})`;
});
```
